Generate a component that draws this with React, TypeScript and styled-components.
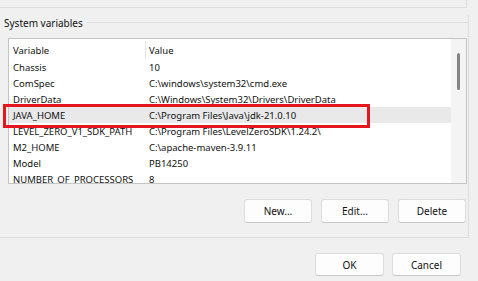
import React from "react";
import styled, { createGlobalStyle } from "styled-components";

const GlobalStyle = createGlobalStyle`
  body {
    margin: 0;
    background: #f0f0f0;
    font-family: "Noto Sans", "Open Sans", sans-serif;
    color: #111111;
  }
`;

type EnvVar = { name: string; value: string; selected?: boolean };

const vars: EnvVar[] = [
  { name: "Chassis", value: "10" },
  { name: "ComSpec", value: "C:\\windows\\system32\\cmd.exe" },
  { name: "DriverData", value: "C:\\Windows\\System32\\Drivers\\DriverData" },
  { name: "JAVA_HOME", value: "C:\\Program Files\\Java\\jdk-21.0.10", selected: true },
  { name: "LEVEL_ZERO_V1_SDK_PATH", value: "C:\\Program Files\\LevelZeroSDK\\1.24.2\\" },
  { name: "M2_HOME", value: "C:\\apache-maven-3.9.11" },
  { name: "Model", value: "PB14250" },
  { name: "NUMBER_OF_PROCESSORS", value: "8" },
];

export default function App() {
  return (
    <>
      <GlobalStyle />
      <Page>
        <TopStrip />
        <GroupBox>
          <GroupTitle>
            <span>System variables</span>
            <TitleLine />
          </GroupTitle>
          <ListBox>
            <Table>
              <Row header>
                <NameCell header>Variable</NameCell>
                <ValueCell>Value</ValueCell>
              </Row>
              {vars.map((v) => (
                <Row key={v.name} selected={v.selected}>
                  <NameCell>{v.name}</NameCell>
                  <ValueCell>{v.value}</ValueCell>
                </Row>
              ))}
            </Table>
            <ScrollTrack>
              <Thumb />
            </ScrollTrack>
          </ListBox>
          <ButtonRow>
            <Button>New...</Button>
            <Button>Edit...</Button>
            <Button>Delete</Button>
          </ButtonRow>
        </GroupBox>
        <Footer>
          <Button small>OK</Button>
          <Button small>Cancel</Button>
        </Footer>
        <Highlight />
      </Page>
    </>
  );
}

const Page = styled.div`
  position: relative;
  width: 478px;
  height: 281px;
  overflow: hidden;
  font-size: 9.5px;
`;

const TopStrip = styled.div`
  width: 466px;
  height: 7px;
  border-bottom: 1px solid #dedede;
  border-right: 1px solid #dedede;
`;

const GroupBox = styled.div`
  width: 468px;
  margin-top: 7px;
  border-right: 1px solid #dedede;
  border-bottom: 1px solid #dedede;
  padding-bottom: 14px;
`;

const GroupTitle = styled.div`
  display: flex;
  align-items: center;
  height: 16px;
  padding-left: 4px;
  font-size: 10px;
  span {
    white-space: nowrap;
  }
`;

const TitleLine = styled.div`
  flex: 1;
  height: 1px;
  margin-left: 4px;
  margin-top: -1px;
  background: #dedede;
`;

const ListBox = styled.div`
  box-sizing: border-box;
  display: flex;
  width: 459px;
  height: 146px;
  margin: 7px 0 0 8px;
  border: 1px solid #c4c4c4;
  background: #ffffff;
  overflow: hidden;
`;

const Table = styled.div`
  flex: 1;
  display: flex;
  flex-direction: column;
  padding-top: 1px;
`;

const Row = styled.div<{ header?: boolean; selected?: boolean }>`
  display: flex;
  align-items: center;
  flex-shrink: 0;
  height: ${(p) => (p.header ? "19px" : "16px")};
  padding-top: ${(p) => (p.header ? "1px" : "0")};
  box-sizing: border-box;
  background: ${(p) => (p.selected ? "#e9e9e9" : "transparent")};
  white-space: nowrap;
`;

const NameCell = styled.div<{ header?: boolean }>`
  box-sizing: border-box;
  width: 137px;
  height: 100%;
  padding-left: 4px;
  display: flex;
  align-items: center;
  border-right: 1px solid ${(p) => (p.header ? "#e5e5e5" : "transparent")};
`;

const ValueCell = styled.div`
  padding-left: 3px;
`;

const ScrollTrack = styled.div`
  width: 15px;
  background: #f4f4f4;
  display: flex;
  justify-content: center;
  padding-top: 14px;
  box-sizing: border-box;
`;

const Thumb = styled.div`
  width: 3px;
  height: 37px;
  border-radius: 2px;
  background: #858585;
`;

const ButtonRow = styled.div`
  display: flex;
  justify-content: flex-end;
  gap: 9px;
  margin-top: 15px;
  padding-right: 2px;
`;

const Button = styled.div<{ small?: boolean }>`
  box-sizing: border-box;
  width: ${(p) => (p.small ? "69px" : "68px")};
  height: ${(p) => (p.small ? "23px" : "24px")};
  display: flex;
  align-items: center;
  justify-content: center;
  background: #fdfdfd;
  border: 1px solid #dcdcdc;
  border-bottom-color: #c8c8c8;
  border-radius: 3px;
  font-size: 10px;
`;

const Footer = styled.div`
  display: flex;
  justify-content: flex-end;
  gap: 8px;
  margin-top: 15px;
  padding-right: 17px;
`;

const Highlight = styled.div`
  position: absolute;
  left: 3px;
  top: 104px;
  width: 367px;
  height: 24px;
  box-sizing: border-box;
  border: 3px solid #e5161f;
`;
